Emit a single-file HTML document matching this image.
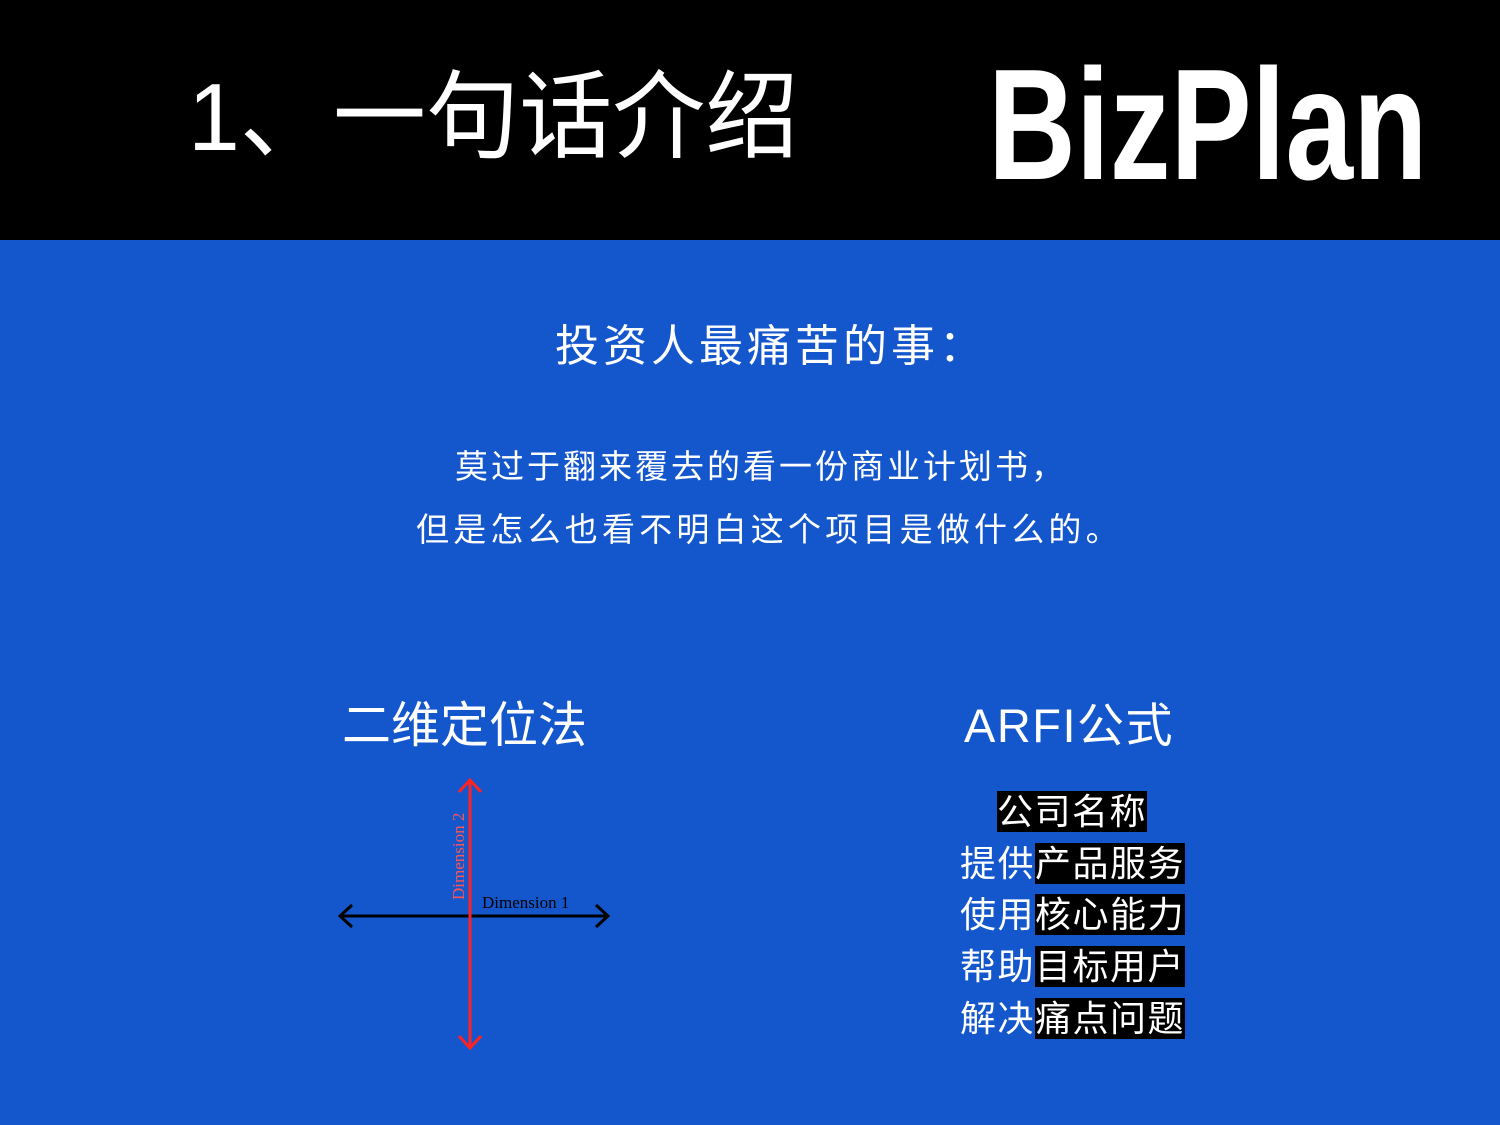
<!DOCTYPE html>
<html><head><meta charset="utf-8"><style>
body{margin:0;width:1500px;height:1125px;background:#1456cc;overflow:hidden;position:relative;font-family:"Liberation Sans","Noto Sans CJK SC",sans-serif;color:#fff}
.hd{position:absolute;left:0;top:0;width:1500px;height:240px;background:#000}
.t{position:absolute;white-space:nowrap;line-height:1}
.bk{background:#000}
</style></head><body>
<div class="hd"></div>
<div class="t" style="left:188px;top:70px;font-size:96px;transform:scaleX(0.97);transform-origin:left top">1、一句话介绍</div>
<div class="t" style="left:988px;top:46px;font-size:158px;font-weight:bold;transform:scaleX(0.77);transform-origin:left top">BizPlan</div>
<div class="t" style="left:555px;top:325px;font-size:44px;letter-spacing:4px">投资人最痛苦的事：</div>
<div class="t" style="left:455px;top:450px;font-size:33px;letter-spacing:3px">莫过于翻来覆去的看一份商业计划书，</div>
<div class="t" style="left:416px;top:513px;font-size:33px;letter-spacing:4.2px">但是怎么也看不明白这个项目是做什么的。</div>
<div class="t" style="left:342px;top:702px;font-size:49px">二维定位法</div>
<div class="t" style="left:964px;top:702px;font-size:47px;letter-spacing:1.5px">ARFI公式</div>
<svg style="position:absolute;left:330px;top:770px" width="300" height="290">
<line x1="10" y1="146" x2="278" y2="146" stroke="#000" stroke-width="3"/>
<polyline points="22,135 10,146 22,157" fill="none" stroke="#000" stroke-width="3"/>
<polyline points="266,135 278,146 266,157" fill="none" stroke="#000" stroke-width="3"/>
<line x1="140" y1="10" x2="140" y2="278" stroke="#f22" stroke-width="3"/>
<polyline points="129,22 140,10 151,22" fill="none" stroke="#f22" stroke-width="3"/>
<polyline points="129,266 140,278 151,266" fill="none" stroke="#f22" stroke-width="3"/>
<text x="152" y="138" font-family="Liberation Serif" font-size="17" fill="#000">Dimension 1</text>
<text transform="translate(134,130) rotate(-90)" font-family="Liberation Serif" font-size="17" fill="#f55">Dimension 2</text>
</svg>
<div class="t" style="left:997px;top:790px;font-size:36px;line-height:44px;letter-spacing:1.5px"><span class="bk">公司名称</span></div>
<div class="t" style="left:960px;top:842px;font-size:36px;line-height:44px;letter-spacing:1.5px">提供<span class="bk">产品服务</span></div>
<div class="t" style="left:960px;top:893px;font-size:36px;line-height:44px;letter-spacing:1.5px">使用<span class="bk">核心能力</span></div>
<div class="t" style="left:960px;top:945px;font-size:36px;line-height:44px;letter-spacing:1.5px">帮助<span class="bk">目标用户</span></div>
<div class="t" style="left:960px;top:997px;font-size:36px;line-height:44px;letter-spacing:1.5px">解决<span class="bk">痛点问题</span></div>
</body></html>
